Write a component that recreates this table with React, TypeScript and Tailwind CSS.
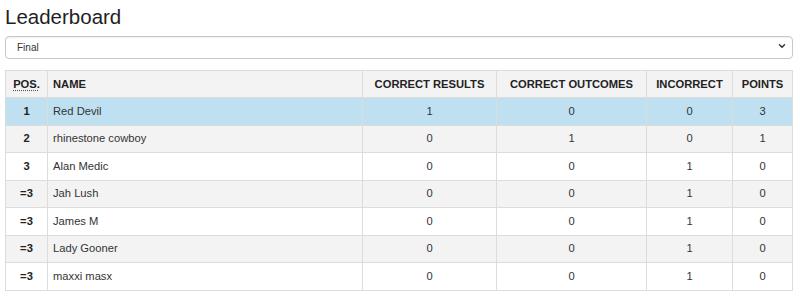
import { ChevronDown } from 'lucide-react';

type Row = {
    pos: string;
    name: string;
    results: number;
    outcomes: number;
    incorrect: number;
    points: number;
};

const rows: Row[] = [
    { pos: '1', name: 'Red Devil', results: 1, outcomes: 0, incorrect: 0, points: 3 },
    { pos: '2', name: 'rhinestone cowboy', results: 0, outcomes: 1, incorrect: 0, points: 1 },
    { pos: '3', name: 'Alan Medic', results: 0, outcomes: 0, incorrect: 1, points: 0 },
    { pos: '=3', name: 'Jah Lush', results: 0, outcomes: 0, incorrect: 1, points: 0 },
    { pos: '=3', name: 'James M', results: 0, outcomes: 0, incorrect: 1, points: 0 },
    { pos: '=3', name: 'Lady Gooner', results: 0, outcomes: 0, incorrect: 1, points: 0 },
    { pos: '=3', name: 'maxxi masx', results: 0, outcomes: 0, incorrect: 1, points: 0 },
];

export default function App() {
    const rowBg = (i: number) => {
        if (i === 0) return 'bg-[#bfe0f0]';
        return i % 2 === 1 ? 'bg-[#f3f3f3]' : 'bg-white';
    };

    return (
        <div className="w-[800px] h-[301px] bg-white px-[5px] pt-[5px] text-[#222] font-['Liberation_Sans',Arial,sans-serif]">
            <h1 className="text-[20.5px] leading-[24px] font-normal text-[#1f1f1f]">Leaderboard</h1>

            <div className="relative mt-[5px] w-[788px]">
                <select className="w-full h-[23px] appearance-none rounded-[4px] border border-[#c8c8c8] bg-white pl-[11px] text-[10px] text-[#333] shadow-[inset_0_1px_1px_rgba(0,0,0,0.06)] outline-none">
                    <option>Final</option>
                </select>
                <ChevronDown className="absolute right-[6px] top-[7px] size-[10px] text-[#333]" strokeWidth={3.5} />
            </div>

            <table className="mt-[11px] w-[787px] border-collapse table-fixed text-[11.2px] text-[#333]">
                <colgroup>
                    <col className="w-[42px]" />
                    <col className="w-[315px]" />
                    <col className="w-[134px]" />
                    <col className="w-[150px]" />
                    <col className="w-[86px]" />
                    <col className="w-[60px]" />
                </colgroup>
                <thead>
                    <tr className="bg-[#f3f3f3] h-[27px] text-[#222]">
                        <th className="border border-[#dcdcdc] text-center font-bold">
                            <abbr title="Position" className="underline decoration-dotted underline-offset-2 decoration-[#555]">POS.</abbr>
                        </th>
                        <th className="border border-[#dcdcdc] text-left pl-[5px] font-bold">NAME</th>
                        <th className="border border-[#dcdcdc] text-center font-bold">CORRECT RESULTS</th>
                        <th className="border border-[#dcdcdc] text-center font-bold">CORRECT OUTCOMES</th>
                        <th className="border border-[#dcdcdc] text-center font-bold">INCORRECT</th>
                        <th className="border border-[#dcdcdc] text-center font-bold">POINTS</th>
                    </tr>
                </thead>
                <tbody>
                    {rows.map((r, i) => (
                        <tr key={i} className={`h-[27.5px] ${rowBg(i)}`}>
                            <td className="border border-[#dcdcdc] text-center font-bold text-[#222]">{r.pos}</td>
                            <td className="border border-[#dcdcdc] pl-[5px]">{r.name}</td>
                            <td className="border border-[#dcdcdc] text-center">{r.results}</td>
                            <td className="border border-[#dcdcdc] text-center">{r.outcomes}</td>
                            <td className="border border-[#dcdcdc] text-center">{r.incorrect}</td>
                            <td className="border border-[#dcdcdc] text-center">{r.points}</td>
                        </tr>
                    ))}
                </tbody>
            </table>
        </div>
    );
}
